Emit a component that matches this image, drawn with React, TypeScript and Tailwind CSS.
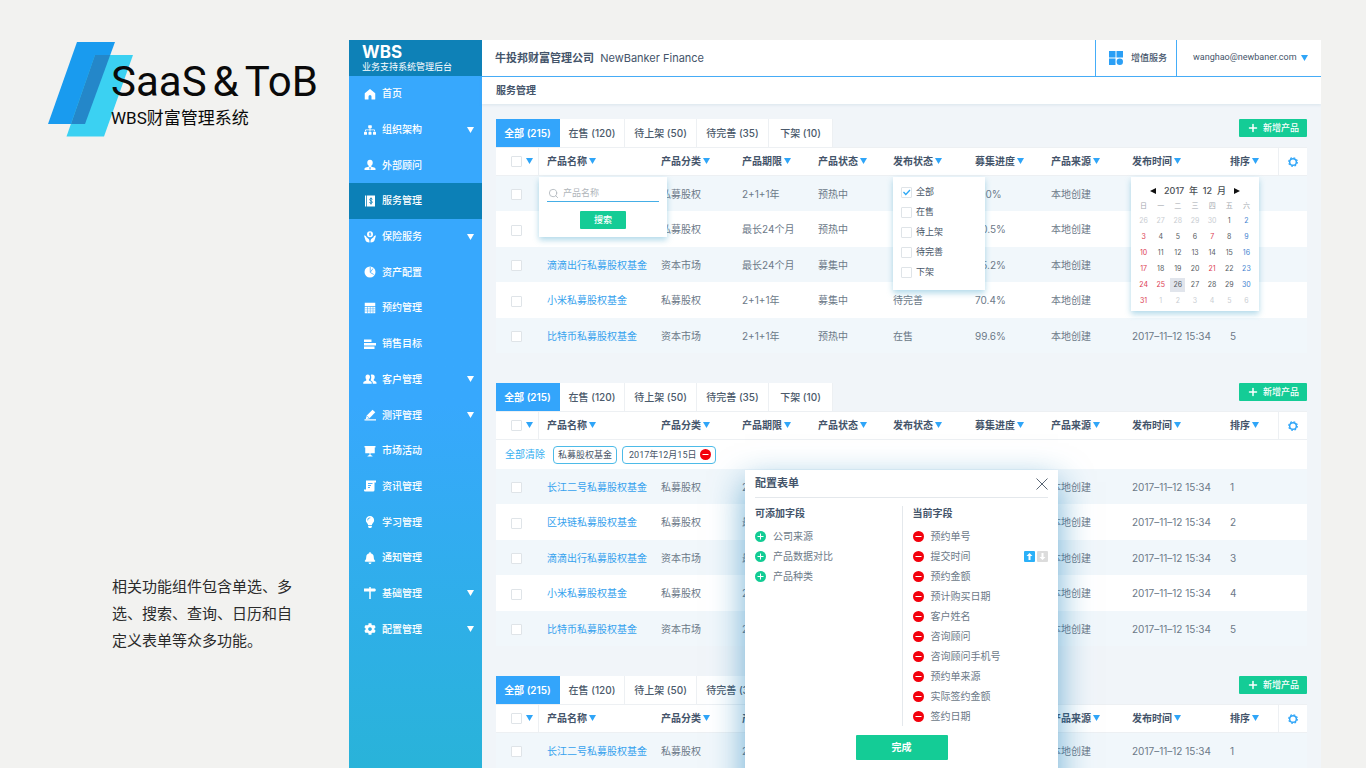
import { useState } from 'react';
import type { ReactNode } from 'react';
import { FaBell, FaCog, FaLightbulb, FaSitemap } from 'react-icons/fa';
import { Plus, Search } from 'lucide-react';
import { cx } from 'class-variance-authority';

type Row = {
  name: string;
  category: string;
  period: string;
  status: string;
  publish: string;
  progress: string;
  source: string;
  time: string;
  sort: number;
};

const PRODUCTS: Row[] = [
  { name: '长江二号私募股权基金', category: '私募股权', period: '2+1+1年', status: '预热中', publish: '在售', progress: '100%', source: '本地创建', time: '2017–11–12 15:34', sort: 1 },
  { name: '区块链私募股权基金', category: '私募股权', period: '最长24个月', status: '预热中', publish: '在售', progress: '80.5%', source: '本地创建', time: '2017–11–12 15:34', sort: 2 },
  { name: '滴滴出行私募股权基金', category: '资本市场', period: '最长24个月', status: '募集中', publish: '待上架', progress: '65.2%', source: '本地创建', time: '2017–11–12 15:34', sort: 3 },
  { name: '小米私募股权基金', category: '私募股权', period: '2+1+1年', status: '募集中', publish: '待完善', progress: '70.4%', source: '本地创建', time: '2017–11–12 15:34', sort: 4 },
  { name: '比特币私募股权基金', category: '资本市场', period: '2+1+1年', status: '预热中', publish: '在售', progress: '99.6%', source: '本地创建', time: '2017–11–12 15:34', sort: 5 },
];

const TABS = [
  { label: '全部 (215)', width: 'w-16' },
  { label: '在售 (120)', width: 'w-[65px]' },
  { label: '待上架 (50)', width: 'w-[72px]' },
  { label: '待完善 (35)', width: 'w-[72px]' },
  { label: '下架 (10)', width: 'w-16' },
];

const COLUMNS = [
  { id: 'name', label: '产品名称', width: 'w-[114px]' },
  { id: 'category', label: '产品分类', width: 'w-[81px]' },
  { id: 'period', label: '产品期限', width: 'w-[76px]' },
  { id: 'status', label: '产品状态', width: 'w-[75px]' },
  { id: 'publish', label: '发布状态', width: 'w-[82px]' },
  { id: 'progress', label: '募集进度', width: 'w-[76px]' },
  { id: 'source', label: '产品来源', width: 'w-[81px]' },
  { id: 'time', label: '发布时间', width: 'w-[98px]' },
  { id: 'sort', label: '排序', width: 'w-[56px]' },
];

const AVAILABLE = ['公司来源', '产品数据对比', '产品种类'];
const CURRENT = ['预约单号', '提交时间', '预约金额', '预计购买日期', '客户姓名', '咨询顾问', '咨询顾问手机号', '预约单来源', '实际签约金额', '签约日期'];

const Glyph = ({ children }: { children: ReactNode }) => (
  <svg viewBox="0 0 24 24" className="size-3 overflow-visible" fill="currentColor" aria-hidden="true">
    {children}
  </svg>
);

const CUT = '#37a8fd';

const MENU: { label: string; icon: ReactNode; more?: boolean }[] = [
  { label: '首页', icon: <Glyph><path d="M12 2 1.5 10.5V22a1 1 0 0 0 1 1H9v-6a3 3 0 0 1 6 0v6h6.500a1 1 0 0 0 1-1V10.500z" /></Glyph> },
  { label: '组织架构', icon: <FaSitemap className="size-3" />, more: true },
  { label: '外部顾问', icon: <Glyph><path d="M12 1.500c3.500 0 5.500 2.500 5.500 6 0 3-1.500 5.200-3 6v2l6 1.500c1.500.5 2.500 1.500 2.500 3V22H1v-2c0-1.500 1-2.500 2.500-3l6-1.500v-2c-1.500-.8-3-3-3-6 0-3.500 2-6 5.500-6z" /><path d="m10.500 16 1.500 1 1.500-1-.5 5h-2z" fill={CUT} /></Glyph> },
  { label: '服务管理', icon: <Glyph><path d="M2 1h2.500v22H2zM6 1h16v22H6z" /><path d="M16.500 9c0-1.500-1-2-2.500-2s-2.500.8-2.500 2.300c0 3 5 2 5 5 0 1.500-1 2.300-2.500 2.300s-2.700-.6-2.700-2.300M14 5v14" fill="none" stroke="#0c7fb6" strokeWidth="1.800" /></Glyph> },
  { label: '保险服务', icon: <Glyph><circle cx="12" cy="6.500" r="6" /><path d="M12 3v7M14 4.500h-3v2h2.500v2h-3" fill="none" stroke={CUT} strokeWidth="1.300" /><path d="M0 9c3-.5 4 1 5 3.500l4.500 3.500c1.500 1.500 1.500 4 1.500 7-5 0-8-2-8.500-6zM24 9c-3-.5-4 1-5 3.500L14.500 16c-1.500 1.500-1.500 4-1.500 7 5 0 8-2 8.500-6z" /></Glyph>, more: true },
  { label: '资产配置', icon: <Glyph><circle cx="12" cy="12" r="11" /><path d="M12.500 2v11l7 4M13 12l5-7" fill="none" stroke={CUT} strokeWidth="1.500" /></Glyph> },
  { label: '预约管理', icon: <Glyph><path d="M1.500 1.500h21V8h-21zM1.500 9.500h21v13h-21z" /><path d="M1.500 13.500h21M1.500 18h21M7 9.500v13M12.500 9.500v13M18 9.500v13" stroke={CUT} strokeWidth="1" /></Glyph> },
  { label: '销售目标', icon: <Glyph><path d="M0 3h15v5H0zM0 10h24v5H0zM0 17h21v5H0z" /></Glyph> },
  { label: '客户管理', icon: <Glyph><path d="M7.500 3c3 0 4.500 2.200 4.500 5 0 2.300-1 4.200-2.200 5v2l4 2c1 .5 1.700 1.500 1.700 3v1.500h-17V20c0-1.500.7-2.500 1.700-3l4.300-2v-2C3.500 12 3 10.300 3 8c0-2.800 1.500-5 4.500-5z" /><path d="M16.500 3C20 3 21.500 5.200 21.500 8c0 2.300-.7 4-2 5v2l4 2c1 .5 1.500 1.500 1.500 3v1.500h-7.500V20c0-2-1-3.500-2.500-4.200L13 14.500c1-1.500 1.500-3.500 1.500-6 0-2-.4-3.500-1-4.500.8-.7 1.800-1 3-1z" /></Glyph>, more: true },
  { label: '测评管理', icon: <Glyph><path d="m17 1.500 5.500 5L11 18.500l-7.500 2 2-7.500z" /><path d="m5 13.500 6 5" stroke={CUT} strokeWidth="1.200" /><path d="M1 20.500h23V23H1z" /></Glyph>, more: true },
  { label: '市场活动', icon: <Glyph><path d="M1 2h22v3H1zM2.500 5h19v11.500h-19zM11 16.500h2v3l4 2.500v1H7v-1l4-2.500z" /></Glyph> },
  { label: '资讯管理', icon: <Glyph><path d="M4 1h20v4h-3v15a3 3 0 0 1-3 3H3c-2 0-3-1-3-3v-1h4z" /><path d="M8 7h9M8 11h6M8 15h4" stroke={CUT} strokeWidth="1.800" /></Glyph> },
  { label: '学习管理', icon: <FaLightbulb className="size-3" /> },
  { label: '通知管理', icon: <FaBell className="size-3" /> },
  { label: '基础管理', icon: <Glyph><path d="M10.500 0h3v3H22l2 3-2 3h-8.500v15h-3V9H0V3h10.500z" /></Glyph>, more: true },
  { label: '配置管理', icon: <FaCog className="size-3" />, more: true },
];

const Triangle = ({ className }: { className?: string }) => (
  <svg viewBox="0 0 7 6" className={cx('h-1.5 w-[7px] shrink-0', className)} fill="currentColor" aria-hidden="true">
    <path d="M0 0h7L3.500 6z" />
  </svg>
);

const RingGear = () => (
  <svg viewBox="0 0 24 24" className="size-2.5" fill="none" stroke="currentColor" aria-hidden="true">
    <circle cx="12" cy="12" r="8" strokeWidth="3.500" />
    <circle cx="12" cy="12" r="10.500" strokeWidth="2.500" strokeDasharray="4.200 4.047" />
  </svg>
);

const Dot = ({ kind }: { kind: 'add' | 'remove' }) => (
  <svg viewBox="0 0 11 11" className="size-[11px] shrink-0" aria-hidden="true">
    <circle cx="5.500" cy="5.500" r="5.500" fill={kind === 'add' ? '#12cc94' : '#f3000c'} />
    <path d={kind === 'add' ? 'M2.500 5.500h6M5.500 2.500v6' : 'M2.500 5.500h6'} stroke="#fff" strokeWidth="1" />
  </svg>
);

function Checkbox({ label, defaultChecked }: { label: string; defaultChecked?: boolean }) {
  return (
    <span className="relative inline-flex size-[11px] shrink-0 align-middle">
      <input
        type="checkbox"
        aria-label={label}
        defaultChecked={defaultChecked}
        className="peer size-[11px] appearance-none rounded-[1px] border border-[#dfe4e8] bg-white"
      />
      <svg viewBox="0 0 11 11" className="pointer-events-none absolute inset-0 hidden peer-checked:block" fill="none" aria-hidden="true">
        <path d="m2.500 5 2.300 2.500L9 3" stroke="#2ba7f5" strokeWidth="1.300" />
      </svg>
    </span>
  );
}

const POPOVER = 'absolute top-full z-10 mt-0.5 bg-white font-normal shadow-[0_3px_6px_rgba(60,160,200,0.4)]';

function SearchPopover() {
  return (
    <form className={cx(POPOVER, 'left-0 flex w-32 flex-col items-center gap-[9px] px-2 pt-2 pb-2')} onSubmit={(e) => e.preventDefault()}>
      <label className="flex h-[17px] w-full items-center gap-1 border-b border-[#45aee6] pl-px">
        <Search className="size-[11px] shrink-0 text-[#b4bac0]" />
        <input type="text" aria-label="产品名称" placeholder="产品名称" className="w-full min-w-0 text-[9px] outline-none placeholder:text-[#b0b5ba]" />
      </label>
      <button type="submit" className="h-[18px] w-[46px] rounded-[1px] bg-[#14cc96] text-[9px] font-medium text-white">搜索</button>
    </form>
  );
}

function StatusPopover() {
  return (
    <div className={cx(POPOVER, 'left-2 w-[92px] px-2 pt-[5px] pb-2')}>
      {['全部', '在售', '待上架', '待完善', '下架'].map((s, i) => (
        <label key={s} className="flex h-5 items-center gap-1 text-[9px] text-[#475466]">
          <Checkbox label={s} defaultChecked={i === 0} />
          {s}
        </label>
      ))}
    </div>
  );
}

const HOLIDAYS = [7, 21, 25];

function CalendarPopover() {
  // 42 cells, the first one is 26 November
  const cells = Array.from({ length: 42 }, (_, i) => {
    const n = i - 4;
    const outside = n < 1 || n > 31;
    return { day: n < 1 ? n + 30 : n > 31 ? n - 31 : n, outside, week: i % 7 };
  });

  return (
    <div className={cx(POPOVER, 'left-[7px] w-32 px-1 pt-1.5 pb-0.5')}>
      <div className="flex h-4 items-center justify-between px-[15px] text-[9px] font-medium text-[#4a4f55]">
        <button type="button" aria-label="上个月">
          <svg viewBox="0 0 6 6" className="size-1.5" fill="#111"><path d="M6 0v6L0 3z" /></svg>
        </button>
        <span className="whitespace-pre">2017  年  12  月</span>
        <button type="button" aria-label="下个月">
          <svg viewBox="0 0 6 6" className="size-1.5" fill="#111"><path d="M0 0v6l6-3z" /></svg>
        </button>
      </div>
      <div className="grid grid-cols-7 text-center text-[7px] leading-[14px] text-[#a4a9af]">
        {['日', '一', '二', '三', '四', '五', '六'].map((d) => <span key={d}>{d}</span>)}
      </div>
      <div className="grid grid-cols-7 justify-items-center text-[7px]">
        {cells.map((c, i) => (
          <button
            key={i}
            type="button"
            className={cx(
              'my-px flex h-3.5 w-[15px] items-center justify-center',
              c.outside && 'text-[#c9cdd2]',
              !c.outside && (c.week === 0 || HOLIDAYS.includes(c.day)) && 'text-[#dc3b52]',
              !c.outside && c.week === 6 && 'text-[#3f83d0]',
              !c.outside && c.week > 0 && c.week < 6 && !HOLIDAYS.includes(c.day) && 'text-[#555b62]',
              !c.outside && c.day === 26 && 'bg-[#e1e5ec]',
            )}
          >
            {c.day}
          </button>
        ))}
      </div>
    </div>
  );
}

function ProductSection({ popovers = false, filters = false }: { popovers?: boolean; filters?: boolean }) {
  const [active, setActive] = useState(0);

  return (
    <section>
      <div className="flex items-start justify-between">
        <div role="tablist" className="flex">
          {TABS.map((t, i) => (
            <button
              key={t.label}
              type="button"
              role="tab"
              aria-selected={i === active}
              onClick={() => setActive(i)}
              className={cx(
                'h-7 border-r text-[10px] whitespace-nowrap',
                t.width,
                i === active ? 'border-[#33a5fb] bg-[#33a5fb] font-semibold text-white' : 'border-[#edf0f3] bg-white font-medium text-[#4b5a6b]',
              )}
            >
              {t.label}
            </button>
          ))}
        </div>
        <button type="button" className="flex h-[18px] w-[68px] items-center justify-center gap-1 rounded-[1px] bg-[#14cc96] text-[9px] font-medium text-white">
          <Plus className="size-3" strokeWidth={3} />
          新增产品
        </button>
      </div>

      <table className="w-full table-fixed border-separate border-spacing-0 text-left text-[10px] leading-4 whitespace-nowrap">
        <thead>
          <tr className="bg-white text-[#44546a]">
            <th className="h-[29px] w-[43px] border-y border-r border-[#edf0f3] pb-px pl-[15px]">
              <span className="flex items-center gap-1">
                <Checkbox label="全选" />
                <Triangle className="text-[#2fa5f8]" />
              </span>
            </th>
            {COLUMNS.map((c) => (
              <th key={c.id} className={cx('relative border-y border-[#edf0f3] pb-px pl-2 font-semibold', c.width)}>
                <button type="button" className="flex items-center gap-0.5">
                  {c.label}
                  <Triangle className="text-[#2fa5f8]" />
                </button>
                {popovers && c.id === 'name' && <SearchPopover />}
                {popovers && c.id === 'publish' && <StatusPopover />}
                {popovers && c.id === 'time' && <CalendarPopover />}
              </th>
            ))}
            <th className="w-[29px] border-y border-l border-[#edf0f3]">
              <button type="button" aria-label="配置表单" className="flex w-full justify-center text-[#2fa5f8]">
                <RingGear />
              </button>
            </th>
          </tr>
        </thead>
        <tbody className="text-[#6c7988]">
          {filters && (
            <tr className="bg-white">
              <td colSpan={11} className="h-[29px]">
                <div className="flex items-center pl-[9px] font-['Roboto','Noto_Sans_CJK_SC',sans-serif] text-[9px] text-[#475466]">
                  <button type="button" className="mr-2 text-[10px] text-[#36aff0]">全部清除</button>
                  <span className="mr-[5px] flex h-[18px] items-center rounded-sm border border-[#4dbbe8] px-1">私募股权基金</span>
                  <span className="flex h-[18px] items-center gap-1 rounded-sm border border-[#4dbbe8] pr-1 pl-1.5">
                    2017年12月15日
                    <button type="button" aria-label="移除"><Dot kind="remove" /></button>
                  </span>
                </div>
              </td>
            </tr>
          )}
          {PRODUCTS.map((p) => (
            <tr key={p.sort} className={p.sort % 2 ? 'h-[35px] bg-[#f1f7fb]' : 'h-9 bg-white'}>
              <td className="pl-[15px]"><Checkbox label={p.name} /></td>
              <td className="pl-2"><a href="#" className="text-[#36a2ee]">{p.name}</a></td>
              <td className="pl-2">{p.category}</td>
              <td className="pl-2">{p.period}</td>
              <td className="pl-2">{p.status}</td>
              <td className="pl-2">{p.publish}</td>
              <td className="pl-2">{p.progress}</td>
              <td className="pl-2">{p.source}</td>
              <td className="pl-2">{p.time}</td>
              <td className="pl-2">{p.sort}</td>
              <td />
            </tr>
          ))}
        </tbody>
      </table>
    </section>
  );
}

function ConfigDialog() {
  return (
    <div role="dialog" aria-label="配置表单" className="absolute top-[430px] left-[263px] z-20 w-[313px] bg-white px-[10px] pb-10 text-[10px] text-[#6c7988] shadow-[0_12px_32px_rgba(20,125,185,0.6)]">
      <div className="flex h-7 items-center justify-between border-b border-[#e4e8ec] text-[#44546a]">
        <h2 className="text-[11px] font-semibold">配置表单</h2>
        <button type="button" aria-label="关闭">
          <svg viewBox="0 0 12 12" className="size-3" stroke="#5a6675" strokeWidth="1"><path d="m.5.5 11 11m0-11-11 11" /></svg>
        </button>
      </div>
      <div className="mt-2 grid grid-cols-2">
        <div>
          <h3 className="mb-[5px] h-[15px] leading-[15px] font-semibold text-[#44546a]">可添加字段</h3>
          <ul>
            {AVAILABLE.map((f) => (
              <li key={f} className="flex h-5 items-center gap-[7px]">
                <button type="button" aria-label={'添加' + f}><Dot kind="add" /></button>
                {f}
              </li>
            ))}
          </ul>
        </div>
        <div className="border-l border-[#e4e8ec] pl-[10px]">
          <h3 className="mb-[5px] h-[15px] leading-[15px] font-semibold text-[#44546a]">当前字段</h3>
          <ul>
            {CURRENT.map((f, i) => (
              <li key={f} className="flex h-5 items-center gap-[7px]">
                <button type="button" aria-label={'移除' + f}><Dot kind="remove" /></button>
                {f}
                {i === 1 && (
                  <span className="ml-auto flex gap-0.5">
                    <button type="button" aria-label="上移">
                      <svg viewBox="0 0 11 11" className="size-[11px]"><rect width="11" height="11" rx="1" fill="#2ab0f8" /><path d="M5.500 2 8.500 5H6.500v4h-2V5h-2z" fill="#fff" /></svg>
                    </button>
                    <button type="button" aria-label="下移">
                      <svg viewBox="0 0 11 11" className="size-[11px]"><rect width="11" height="11" rx="1" fill="#dcdcdc" /><path d="M5.500 9l3-3h-2V2h-2v4h-2z" fill="#fff" /></svg>
                    </button>
                  </span>
                )}
              </li>
            ))}
          </ul>
        </div>
      </div>
      <button type="button" className="mx-auto mt-[9px] block h-[25px] w-[92px] rounded-[1px] bg-[#14cc96] font-semibold text-white">完成</button>
    </div>
  );
}

function Sidebar() {
  return (
    <nav className="w-[133px] shrink-0 bg-linear-to-b from-[#37a8fd] from-50% to-[#29b3d9] text-white">
      <div className="flex h-9 flex-col justify-center bg-[#0e81b7] pl-[13px]">
        <strong className="text-[17px] leading-[18px] font-bold">WBS</strong>
        <span className="text-[9px] leading-3">业务支持系统管理后台</span>
      </div>
      <ul className="flex h-[571px] flex-col">
        {MENU.map((m) => (
          <li key={m.label} className="flex-1">
            <a href="#" className={cx('flex h-full items-center gap-1.5 pr-2 pl-[15px] text-[10px] font-medium', m.label === '服务管理' && 'bg-[#0c80b7]')}>
              {m.icon}
              {m.label}
              {m.more && <Triangle className="ml-auto" />}
            </a>
          </li>
        ))}
      </ul>
    </nav>
  );
}

export default function App() {
  return (
    <div className="flex h-screen overflow-hidden bg-[#f2f2f0] font-['Inter','Noto_Sans_CJK_SC',sans-serif]">
      <aside className="flex w-[349px] shrink-0 flex-col justify-between pt-[42px] pb-[114px]">
        <header className="relative ml-12 pt-[18px] pl-[63px] text-[#0a0a0a]">
          <svg viewBox="0 0 85 95" className="absolute top-0 left-0 h-[95px] w-[85px]" aria-hidden="true">
            <path d="M29 0h38L37 82H0z" fill="#199bef" />
            <path d="M47 13h38L56 94.500H18.500z" fill="#3bd1f2" />
            <path d="M47 13h15.200L37 82H23z" fill="#2487c9" />
          </svg>
          <h1 className="relative flex gap-1.5 font-['Roboto',sans-serif] text-[42px] leading-[44px] whitespace-nowrap">
            <span>SaaS</span> <span>&amp;</span> <span>ToB</span>
          </h1>
          <p className="relative mt-0.5 font-['Roboto','Noto_Sans_CJK_SC',sans-serif] text-[17px] leading-6">WBS财富管理系统</p>
        </header>
        <p className="ml-28 w-[182px] text-[15px] leading-[27px] text-[#2b2b2b]">
          相关功能组件包含单选、多选、搜索、查询、日历和自定义表单等众多功能。
        </p>
      </aside>

      <div className="mt-10 mr-[45px] flex min-w-0 flex-1 overflow-hidden">
        <Sidebar />
        <main className="relative min-w-0 flex-1 bg-[#f1f5f9]">
          <header className="flex h-[37px] items-stretch justify-between border-b border-[#45adf8] bg-white pl-[13px] text-[#44546a]">
            <h2 className="flex items-center text-[11px] whitespace-pre"><span className="font-semibold">牛投邦财富管理公司</span>  NewBanker Finance</h2>
            <div className="flex text-[9px]">
              <button type="button" className="flex w-[81px] items-center gap-2 border-l border-[#45adf8] pl-[13px] font-medium">
                <svg viewBox="0 0 14 14" className="size-3.5" fill="#2b9ff5" aria-hidden="true">
                  <path d="M0 0h6.500v6.500H0zM7.500 0H14v6.500H7.500zM0 7.500h6.500V14H0z" />
                  <circle cx="10.800" cy="10.800" r="3.200" />
                </svg>
                增值服务
              </button>
              <button type="button" className="flex w-[145px] items-center gap-1 border-l border-[#45adf8] pl-4 font-['Roboto',sans-serif]">
                wanghao@newbaner.com
                <Triangle className="text-[#2fa5f8]" />
              </button>
            </div>
          </header>
          <div className="flex h-[27px] items-center bg-white pl-[14px] text-[10px] font-semibold text-[#44546a] shadow-[0_1px_3px_rgba(120,160,190,0.2)]">服务管理</div>

          <div className="flex flex-col gap-[30px] px-[14px] pt-[15px]">
            <ProductSection popovers />
            <ProductSection filters />
            <ProductSection />
          </div>

          <ConfigDialog />
        </main>
      </div>
    </div>
  );
}
